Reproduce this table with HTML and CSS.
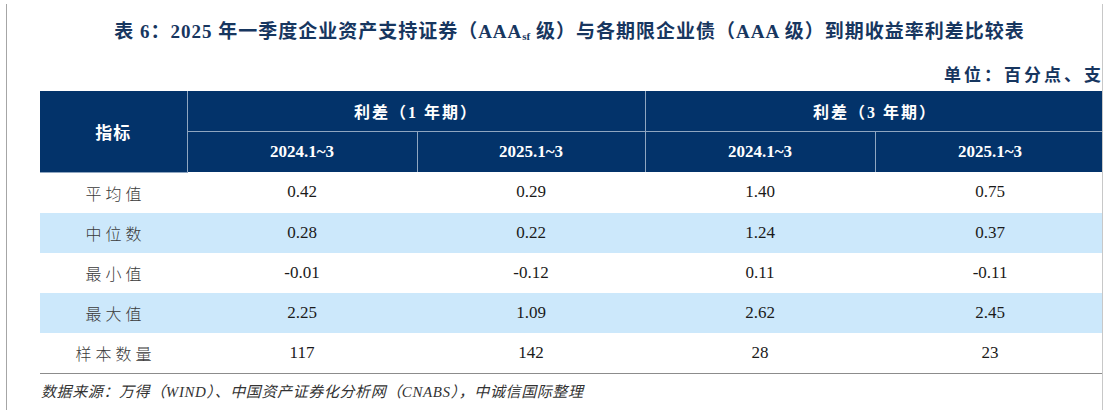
FILE: index.html
```html
<!DOCTYPE html>
<html>
<head>
    <title>表 6 利差比较表</title>
    <meta charset="utf-8">
    <link rel="stylesheet" href="styles.css">
</head>
<body>
    <div class="page">
        <!-- 标题 -->
        <h1 class="title">表 6：2025 年一季度企业资产支持证券（AAA<sub>sf</sub> 级）与各期限企业债（AAA 级）到期收益率利差比较表</h1>
        <div class="unit">单位：百分点、支</div>

        <!-- 表格 -->
        <table class="spread-table">
            <colgroup>
                <col class="c-label">
                <col class="c-val">
                <col class="c-val2">
                <col class="c-val">
                <col class="c-val">
            </colgroup>
            <thead>
                <tr>
                    <th rowspan="2" class="label-head">指标</th>
                    <th colspan="2" class="group">利差（1 年期）</th>
                    <th colspan="2" class="group">利差（3 年期）</th>
                </tr>
                <tr>
                    <th>2024.1~3</th>
                    <th>2025.1~3</th>
                    <th>2024.1~3</th>
                    <th>2025.1~3</th>
                </tr>
            </thead>
            <tbody>
                <tr>
                    <td class="label">平均值</td>
                    <td>0.42</td><td>0.29</td><td>1.40</td><td>0.75</td>
                </tr>
                <tr class="shade">
                    <td class="label">中位数</td>
                    <td>0.28</td><td>0.22</td><td>1.24</td><td>0.37</td>
                </tr>
                <tr>
                    <td class="label">最小值</td>
                    <td>-0.01</td><td>-0.12</td><td>0.11</td><td>-0.11</td>
                </tr>
                <tr class="shade">
                    <td class="label">最大值</td>
                    <td>2.25</td><td>1.09</td><td>2.62</td><td>2.45</td>
                </tr>
                <tr class="last">
                    <td class="label">样本数量</td>
                    <td>117</td><td>142</td><td>28</td><td>23</td>
                </tr>
            </tbody>
        </table>

        <div class="source">数据来源：万得（WIND）、中国资产证券化分析网（CNABS），中诚信国际整理</div>
    </div>
</body>
</html>
```

FILE: styles.css
```css
body {
    margin: 0;
    padding: 0;
    background: #fff;
    font-family: 'Liberation Serif', 'Noto Sans CJK SC', serif;
    color: #222;
}

/* 页面框 */
.page {
    margin: 4px 0 0 6px;
    width: 1097px;
    height: 406px;
    border-left: 1px solid #a6a6a6;
    border-right: 1px solid #c8c8c8;
    overflow: hidden;
    box-sizing: border-box;
}

/* 标题 */
.title {
    margin: 0;
    padding: 16px 0 0 30px;
    text-align: center;
    font-size: 19px;
    line-height: 24px;
    font-weight: bold;
    letter-spacing: 1px;
    color: #17365f;
    white-space: nowrap;
}
.title sub {
    font-size: 11px;
    vertical-align: -2px;
    letter-spacing: 0;
}

.unit {
    margin-top: 16px;
    height: 24px;
    line-height: 24px;
    text-align: right;
    margin-right: -2px;
    font-size: 17px;
    font-weight: bold;
    letter-spacing: 3px;
    color: #17365f;
    white-space: nowrap;
}

/* 表格 */
.spread-table {
    margin: 3px 0 0 33px;
    border-collapse: collapse;
    table-layout: fixed;
    width: 1065px;
}
.c-label { width: 147px; }
.c-val { width: 230px; }
.c-val2 { width: 228px; }

.spread-table th {
    background: #03336a;
    color: #fff;
    height: 40px;
    padding: 0;
    font-size: 17px;
    font-weight: bold;
    text-align: center;
    border: 1px solid #8fa6c0;
}
.spread-table thead tr:first-child th {
    border-top: none;
}
.spread-table th.label-head {
    border-left: none;
    font-size: 17px;
    letter-spacing: 1px;
}
.spread-table th.group {
    font-size: 16px;
    letter-spacing: 2px;
}
.spread-table thead tr:last-child th {
    border-bottom: none;
}

.spread-table td {
    height: 40px;
    padding: 0;
    text-align: center;
    font-size: 17px;
    color: #1a1a1a;
}
.spread-table td.label {
    font-size: 16px;
    letter-spacing: 4px;
    padding-left: 4px;
    color: #3a3a3a;
    font-weight: 300;
}
.spread-table tr.shade td {
    background: #cce8fb;
}
.spread-table tr.last td {
    border-bottom: 1px solid #8c8c8c;
}

/* 数据来源 */
.source {
    margin: 6px 0 0 34px;
    font-size: 15px;
    font-style: italic;
    letter-spacing: 0.6px;
    color: #333;
}
```
